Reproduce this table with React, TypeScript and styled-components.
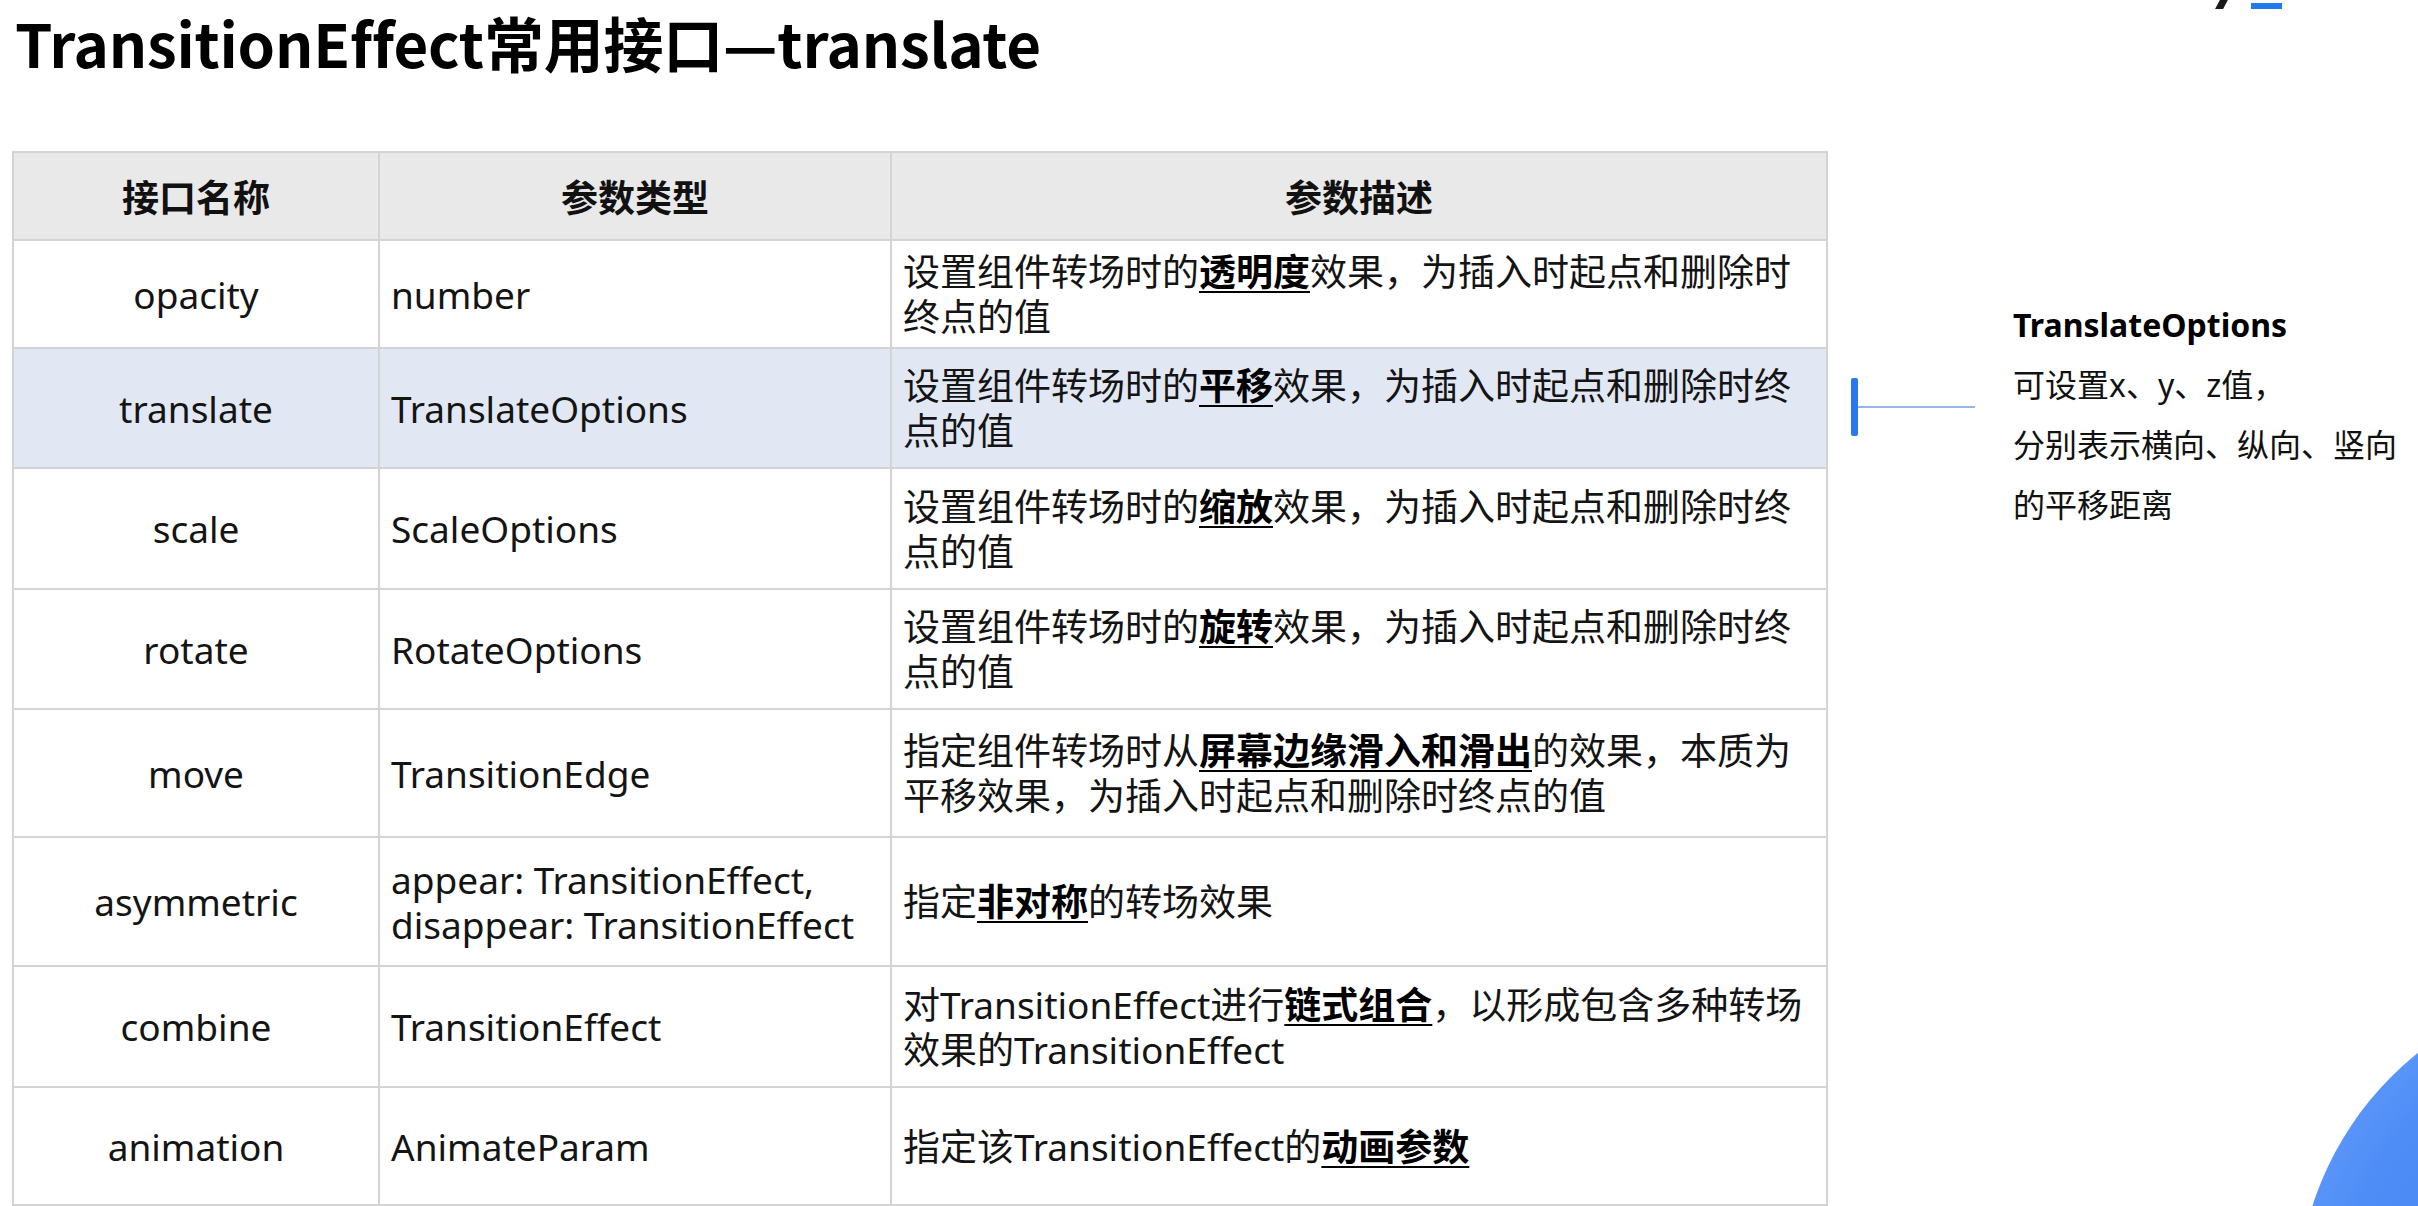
import React from "react";
import styled, { createGlobalStyle } from "styled-components";

const Global = createGlobalStyle`
  html, body { margin: 0; padding: 0; background: #ffffff; }
  body { width: 2418px; height: 1206px; overflow: hidden; font-family: "Noto Sans", "Noto Sans CJK SC", sans-serif; color: #161616; }
`;

const Page = styled.div`
  position: relative;
  width: 2418px;
  height: 1206px;
  overflow: hidden;
  background: #fff;
`;

const Title = styled.h1`
  margin: 0;
  padding: 4px 0 0 15px;
  height: 76px;
  line-height: 76px;
  font-family: "Noto Sans CJK SC", "Noto Sans", sans-serif;
  font-weight: 700;
  font-size: 60px;
  color: #000;
  letter-spacing: -0.2px;
  white-space: nowrap;
`;

const Main = styled.div`
  display: flex;
  align-items: flex-start;
  margin-top: 71px;
  padding-left: 12px;
`;

const Table = styled.table`
  border-collapse: collapse;
  table-layout: fixed;
  width: 1808px;
  font-size: 37px;
  line-height: 45px;
  color: #141414;
`;

const HeadCell = styled.th<{ $w: number }>`
  width: ${(p) => p.$w}px;
  height: 86px;
  background: #e9e9e9;
  border: 2px solid #d4d4d4;
  font-family: "Noto Sans CJK SC", sans-serif;
  font-weight: 700;
  text-align: center;
  padding: 0;
  color: #111;
`;

const Row = styled.tr<{ $hl?: boolean; $h: number }>`
  height: ${(p) => p.$h}px;
  background: ${(p) => (p.$hl ? "#e1e8f4" : "#ffffff")};
`;

const Cell = styled.td<{ $center?: boolean }>`
  border: 2px solid #d4d4d4;
  padding: 0 11px;
  text-align: ${(p) => (p.$center ? "center" : "left")};
  vertical-align: middle;
  font-weight: 400;
`;

const Em = styled.span`
  font-weight: 700;
  text-decoration: underline;
  text-decoration-thickness: 2px;
  text-underline-offset: 5px;
  color: #000;
`;

const Connector = styled.div`
  display: flex;
  align-items: center;
  margin-left: 23px;
  margin-top: 227px;
`;

const Bar = styled.div`
  width: 7px;
  height: 58px;
  border-radius: 2px;
  background: #2b78ee;
`;

const Line = styled.div`
  width: 117px;
  height: 2px;
  background: #94b5ef;
`;

const Note = styled.div`
  margin-left: 38px;
  margin-top: 144px;
  font-family: "Noto Sans", "Noto Sans CJK SC", sans-serif;
  font-size: 32px;
  line-height: 60px;
  color: #111;
  white-space: nowrap;
`;

const NoteHead = styled.div`
  font-weight: 700;
  color: #000;
`;

const NoteLine = styled.div``;

const PageMark = styled.div`
  position: absolute;
  top: 0;
  left: 2215px;
  width: 70px;
  height: 10px;
`;

const Slash = styled.div`
  position: absolute;
  left: 3px;
  top: -2px;
  width: 8px;
  height: 11px;
  background: #1a1a1a;
  transform: skewX(-28deg);
`;

const BlueMark = styled.div`
  position: absolute;
  left: 36px;
  top: 3px;
  width: 31px;
  height: 6px;
  background: #1f7aec;
`;

const Orb = styled.div`
  position: absolute;
  left: 2297px;
  top: 983px;
  width: 642px;
  height: 642px;
  border-radius: 50%;
  background: radial-gradient(circle at 50% 50%, #3f7ef3 0%, #4e8cf6 60%, #6aa3fb 88%, #86b8ff 100%);
  filter: blur(0.6px);
`;

type Seg = string | { b: string };
type RowData = { name: string; type: React.ReactNode; desc: Seg[]; h: number; hl?: boolean };

const rows: RowData[] = [
  { name: "opacity", type: "number", desc: ["设置组件转场时的", { b: "透明度" }, "效果，为插入时起点和删除时终点的值"], h: 108 },
  { name: "translate", type: "TranslateOptions", desc: ["设置组件转场时的", { b: "平移" }, "效果，为插入时起点和删除时终点的值"], h: 120, hl: true },
  { name: "scale", type: "ScaleOptions", desc: ["设置组件转场时的", { b: "缩放" }, "效果，为插入时起点和删除时终点的值"], h: 121 },
  { name: "rotate", type: "RotateOptions", desc: ["设置组件转场时的", { b: "旋转" }, "效果，为插入时起点和删除时终点的值"], h: 120 },
  { name: "move", type: "TransitionEdge", desc: ["指定组件转场时从", { b: "屏幕边缘滑入和滑出" }, "的效果，本质为平移效果，为插入时起点和删除时终点的值"], h: 128 },
  {
    name: "asymmetric",
    type: (
      <>
        appear: TransitionEffect,
        <br />
        disappear: TransitionEffect
      </>
    ),
    desc: ["指定", { b: "非对称" }, "的转场效果"],
    h: 129,
  },
  { name: "combine", type: "TransitionEffect", desc: ["对TransitionEffect进行", { b: "链式组合" }, "，以形成包含多种转场效果的TransitionEffect"], h: 121 },
  { name: "animation", type: "AnimateParam", desc: ["指定该TransitionEffect的", { b: "动画参数" }], h: 118 },
];

export default function App() {
  return (
    <Page>
      <Global />
      <Title>TransitionEffect常用接口—translate</Title>
      <Main>
        <Table>
          <thead>
            <tr>
              <HeadCell $w={364}>接口名称</HeadCell>
              <HeadCell $w={510}>参数类型</HeadCell>
              <HeadCell $w={934}>参数描述</HeadCell>
            </tr>
          </thead>
          <tbody>
            {rows.map((r) => (
              <Row key={r.name} $h={r.h} $hl={r.hl}>
                <Cell $center>{r.name}</Cell>
                <Cell>{r.type}</Cell>
                <Cell>
                  {r.desc.map((s, i) => (typeof s === "string" ? <span key={i}>{s}</span> : <Em key={i}>{s.b}</Em>))}
                </Cell>
              </Row>
            ))}
          </tbody>
        </Table>
        <Connector>
          <Bar />
          <Line />
        </Connector>
        <Note>
          <NoteHead>TranslateOptions</NoteHead>
          <NoteLine>可设置x、y、z值，</NoteLine>
          <NoteLine>分别表示横向、纵向、竖向</NoteLine>
          <NoteLine>的平移距离</NoteLine>
        </Note>
      </Main>
      <PageMark>
        <Slash />
        <BlueMark />
      </PageMark>
      <Orb />
    </Page>
  );
}
